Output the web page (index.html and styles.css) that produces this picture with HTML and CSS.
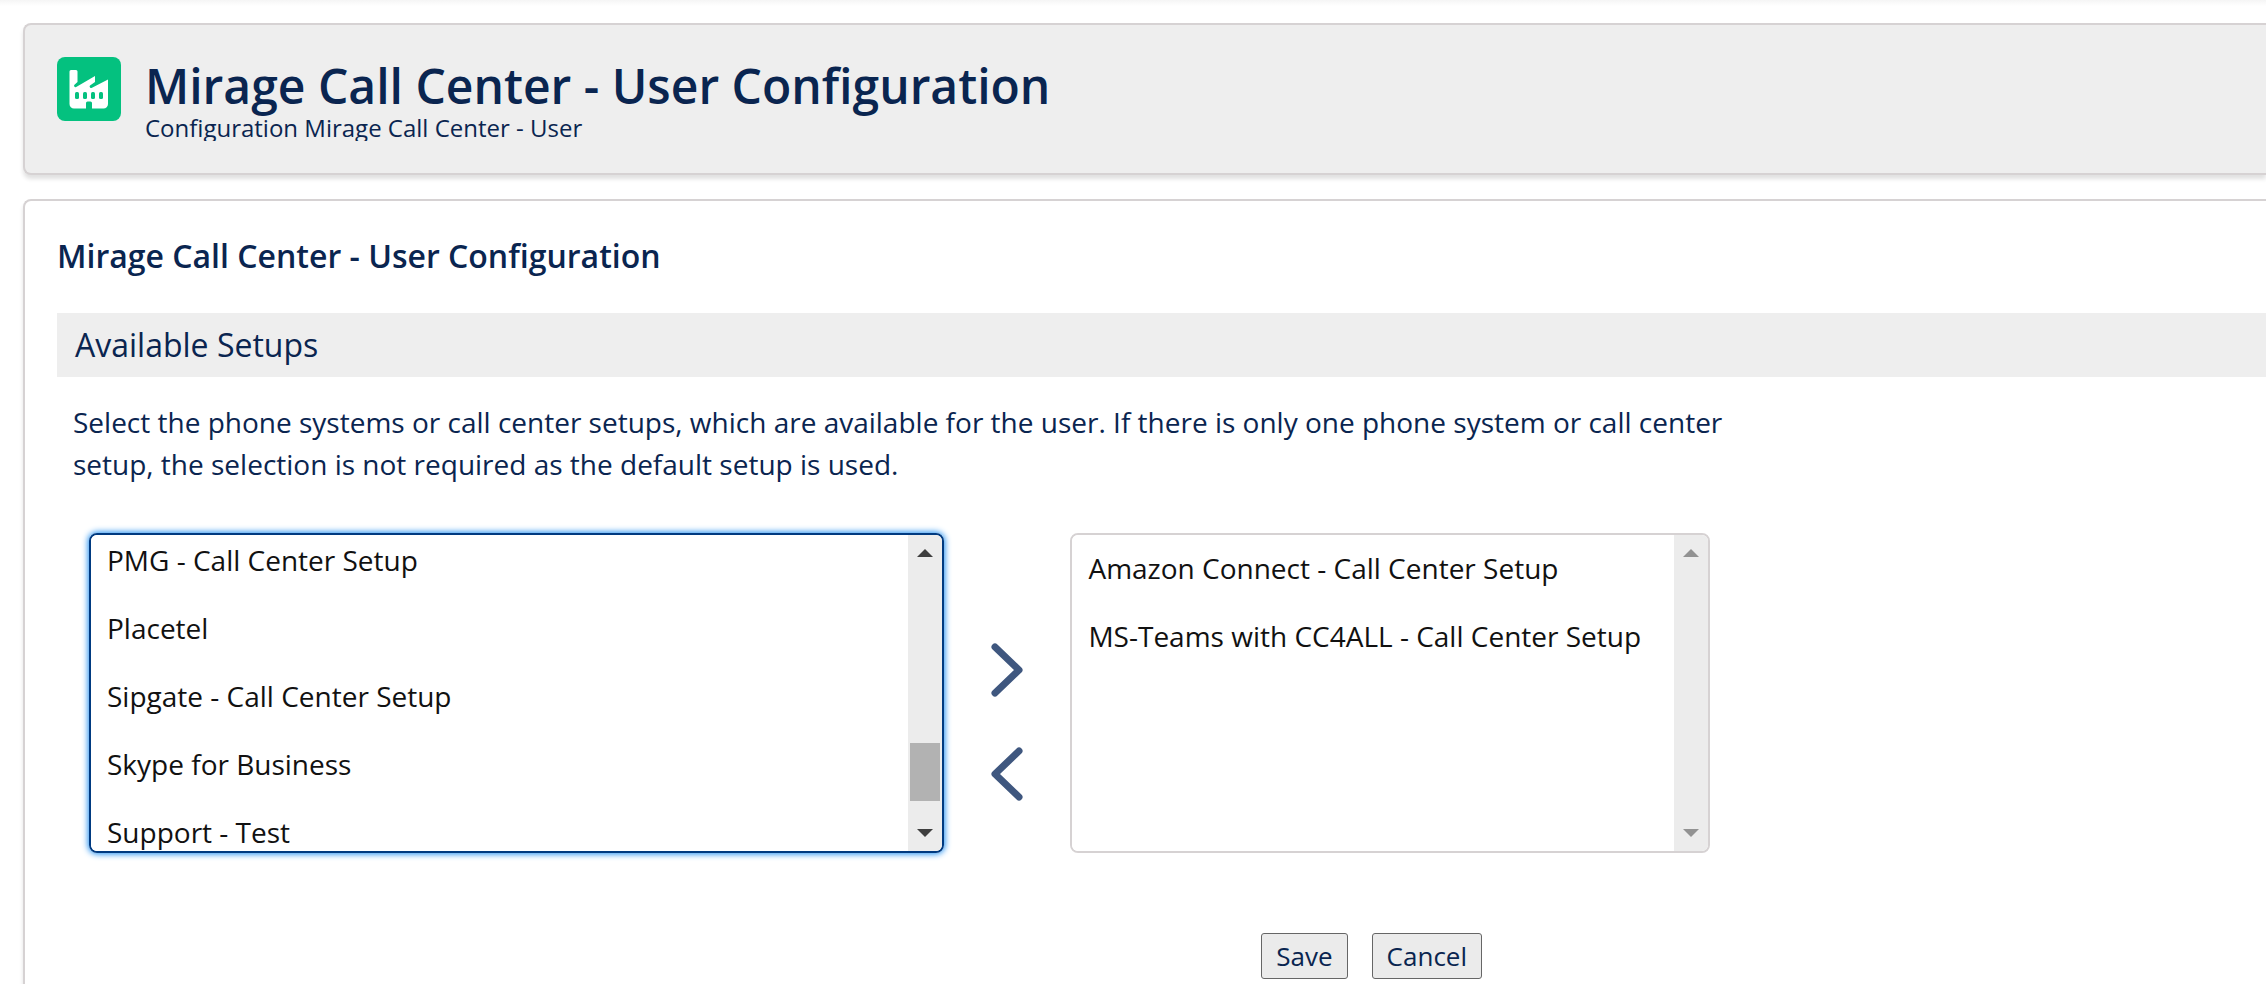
FILE: index.html
```
<!DOCTYPE html>
<html lang="en">
  <head>
    <meta charset="UTF-8" />
    <meta name="viewport" content="width=device-width, initial-scale=1.0" />
    <title>Mirage Call Center - User Configuration</title>
    <link rel="stylesheet" href="styles.css">
  </head>
  <body>
    <header class="page-header">
      <svg class="page-icon" width="64" height="64" viewBox="0 0 64 64">
        <rect width="64" height="64" rx="8" fill="#04c17f" />
        <path
          fill="#fff"
          d="M14 13h5a1.500 1.500 0 0 1 1.500 1.500V25l-3.300 3a1.500 1.500 0 0 0 2 2L38 19v6l-5 3.500a1.500 1.500 0 0 0 2 2.200L51 22.500V47a4.500 4.500 0 0 1-4.500 4.500H35V46a1.500 1.500 0 0 0-1.500-1.500h-3A1.500 1.500 0 0 0 29 46v5.500H17a4.500 4.500 0 0 1-4.500-4.500V14.500A1.500 1.500 0 0 1 14 13z"
        />
        <g fill="#04c17f">
          <rect x="18" y="35" width="4" height="7" rx="1.500" />
          <rect x="26" y="35" width="4" height="7" rx="1.500" />
          <rect x="34" y="35" width="4" height="7" rx="1.500" />
          <rect x="42" y="35" width="4" height="7" rx="1.500" />
        </g>
      </svg>
      <div class="page-title">
        <h1>Mirage Call Center - User Configuration</h1>
        <p>Configuration Mirage Call Center - User</p>
      </div>
    </header>

    <main class="panel">
      <h2>Mirage Call Center - User Configuration</h2>
      <h3 id="setupsTitle">Available Setups</h3>

      <form aria-labelledby="setupsTitle">
        <p class="hint">
          Select the phone systems or call center setups, which are available for
          the user. If there is only one phone system or call center setup, the
          selection is not required as the default setup is used.
        </p>

        <div class="picker">
          <div class="listbox listbox-available focused">
            <select id="available" multiple aria-label="Available setups">
              <option>PMG - Call Center Setup</option>
              <option>Placetel</option>
              <option>Sipgate - Call Center Setup</option>
              <option>Skype for Business</option>
              <option>Support - Test</option>
            </select>
            <div class="scrollbar" aria-hidden="true">
              <svg width="16" height="8" viewBox="0 0 16 8"><path d="M0 8l8-8 8 8z" /></svg>
              <div class="track"><div class="thumb"></div></div>
              <svg width="16" height="8" viewBox="0 0 16 8"><path d="M0 0l8 8 8-8z" /></svg>
            </div>
          </div>

          <div class="move">
            <button type="button" title="Add">
              <svg width="32" height="54" viewBox="0 0 32 54">
                <path d="M4 4l24 23L4 50" />
              </svg>
            </button>
            <button type="button" title="Remove">
              <svg width="32" height="54" viewBox="0 0 32 54">
                <path d="M28 4L4 27l24 23" />
              </svg>
            </button>
          </div>

          <div class="listbox listbox-selected">
            <select id="selected" multiple aria-label="Selected setups">
              <option>Amazon Connect - Call Center Setup</option>
              <option>MS-Teams with CC4ALL - Call Center Setup</option>
            </select>
            <div class="scrollbar disabled" aria-hidden="true">
              <svg width="16" height="8" viewBox="0 0 16 8"><path d="M0 8l8-8 8 8z" /></svg>
              <div class="track"></div>
              <svg width="16" height="8" viewBox="0 0 16 8"><path d="M0 0l8 8 8-8z" /></svg>
            </div>
          </div>
        </div>

        <div class="actions">
          <button type="submit">Save</button>
          <button type="button">Cancel</button>
        </div>
      </form>
    </main>
  </body>
</html>
```
FILE: styles.css
```
* {
  margin: 0;
  padding: 0;
  box-sizing: border-box;
}

body {
  font-family: "Open Sans", "Noto Sans", sans-serif;
  font-size: 28px;
  color: #0a2550;
  background: linear-gradient(#f5f5f5, #fff 6px) no-repeat #fff;
  min-height: 100vh;
  padding: 23px 0 0 23px;
  display: flex;
  flex-direction: column;
  overflow: hidden;
}

/* Both cards run off the right edge of the window */
.page-header,
.panel {
  border: 2px solid #d6d2d3;
  border-right: none;
  border-radius: 8px 0 0 8px;
  padding: 32px 0 32px 32px;
}

.page-header {
  display: flex;
  gap: 24px;
  background-color: #eee;
  box-shadow: 0 4px 4px rgba(0, 0, 0, 0.12);
  margin-bottom: 24px;
}

.page-icon {
  flex: none;
}

h1 {
  font-size: 48px;
  font-weight: 600;
  line-height: 58px;
}

.page-title p {
  font-size: 24px;
  line-height: 26px;
  overflow: hidden;
}

.panel {
  flex: 1;
  background-color: #fff;
  border-bottom: none;
  border-bottom-left-radius: 0;
  padding-bottom: 0;
  box-shadow: 0 4px 4px rgba(0, 0, 0, 0.12);
}

h2 {
  font-size: 32px;
  font-weight: 600;
  line-height: 46px;
  margin-bottom: 34px;
}

h3 {
  font-size: 32px;
  font-weight: 400;
  line-height: 64px;
  background-color: #eee;
  padding-left: 18px;
}

.hint {
  max-width: 1680px;
  line-height: 42px;
  margin: 24px 0 48px;
  padding-left: 16px;
}

.picker,
.actions {
  max-width: 1653px;
}

.picker {
  display: flex;
  padding-left: 32px;
  height: 320px;
}

.listbox {
  display: flex;
  border: 2px solid #d6d2d3;
  border-radius: 8px;
  overflow: hidden;
}

.listbox-available {
  flex: 856;
}

.listbox-selected {
  flex: 639;
}

.listbox.focused {
  border-color: #003a80;
  box-shadow: 0 0 6px 1px #1b8cf0;
}

select {
  flex: 1;
  min-width: 0;
  border: none;
  outline: none;
  background-color: #fff;
  font: inherit;
  overflow: hidden;
}

option {
  color: #111;
  line-height: 40px;
  min-height: 68px;
  padding: 14px 16px;
}

/* List is scrolled a little past the top of its first row */
.focused option:first-child {
  min-height: 60px;
  padding-top: 6px;
}

.scrollbar {
  width: 34px;
  background-color: #ececec;
  padding: 14px 2px;
  display: flex;
  flex-direction: column;
  align-items: center;
  gap: 12px;
}

.scrollbar svg {
  flex: none;
  fill: #3f3f3f;
}

.scrollbar.disabled svg {
  fill: #929292;
}

.track {
  flex: 1;
  width: 100%;
  display: flex;
  flex-direction: column;
  justify-content: flex-end;
}

.thumb {
  height: 58px;
  margin-bottom: 16px;
  background-color: #b2b2b2;
}

.move {
  width: 126px;
  padding-top: 58px;
  display: flex;
  flex-direction: column;
  align-items: center;
  justify-content: center;
  gap: 50px;
}

.move button {
  display: flex;
  background: none;
  border: none;
  cursor: pointer;
}

.move svg {
  fill: none;
  stroke: #3f577f;
  stroke-width: 7;
  stroke-linecap: round;
  stroke-linejoin: round;
}

.actions {
  display: flex;
  justify-content: flex-end;
  gap: 24px;
  padding-right: 228px;
  margin-top: 80px;
}

.actions button {
  font: inherit;
  font-size: 26px;
  line-height: 44px;
  color: inherit;
  background-color: #ebebeb;
  border: 1px solid #666;
  border-radius: 3px;
  padding: 0 14px;
  cursor: pointer;
}
```
